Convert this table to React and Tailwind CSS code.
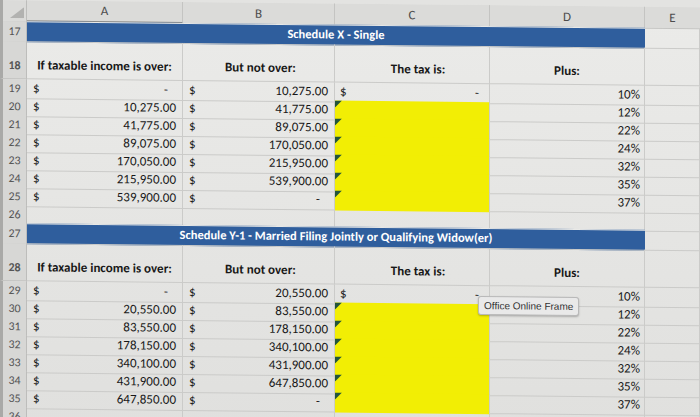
const COLS = "grid grid-cols-[27px_156px_152px_155px_155px_55px]";

const single = {
  over: ["-", "10,275.00", "41,775.00", "89,075.00", "170,050.00", "215,950.00", "539,900.00"],
  notOver: ["10,275.00", "41,775.00", "89,075.00", "170,050.00", "215,950.00", "539,900.00", "-"],
  plus: ["10%", "12%", "22%", "24%", "32%", "35%", "37%"],
};

const married = {
  over: ["-", "20,550.00", "83,550.00", "178,150.00", "340,100.00", "431,900.00", "647,850.00"],
  notOver: ["20,550.00", "83,550.00", "178,150.00", "340,100.00", "431,900.00", "647,850.00", "-"],
  plus: ["10%", "12%", "22%", "24%", "32%", "35%", "37%"],
};

const Num = ({ n, pad = "pb-[1px]" }) => (
  <div className={`border-l-[3px] border-l-[#a9a9a7] border-r border-b border-r-[#bdbdbb] border-b-[#c4c4c2] bg-[#d7d7d5] flex items-end justify-center text-[12px] text-[#555] ${pad}`}>
    {n}
  </div>
);

const Cell = ({ children, className = "" }) => (
  <div className={`border-r border-b border-[#cbcbc9] flex items-end whitespace-nowrap overflow-hidden ${className || "pb-[1px]"}`}>
    {children}
  </div>
);

const Money = ({ v }) => (
  <Cell className={`pb-[1px] justify-between pl-[6px] ${v === "-" ? "pr-[14px]" : "pr-[6px]"}`}>
    <span>$</span>
    <span>{v}</span>
  </Cell>
);

const Yellow = () => (
  <div className="relative bg-[#f2ee04] border-r border-[#cbcbc9]">
    <svg className="absolute left-0 top-0" width="7" height="7" viewBox="0 0 7 7">
      <polygon points="0,0 7,0 0,7" fill="#23553a" />
    </svg>
  </div>
);

const Banner = ({ n, title }) => (
  <div className={`${COLS} h-[20px]`}>
    <Num n={n} />
    <div className="col-span-4 bg-[#2f5e9d] border-b border-t border-t-[#e9e9e7] border-b-[#cbcbc9] flex items-center justify-center text-white font-bold text-[12.5px]">
      {title}
    </div>
    <Cell />
  </div>
);

const Headings = ({ n }) => (
  <div className={`${COLS} h-[38px] font-semibold`}>
    <Num n={n} pad="pb-[4px]" />
    <Cell className="pb-[4px] justify-center">If taxable income is over:</Cell>
    <Cell className="pb-[4px] pl-[42px]">But not over:</Cell>
    <Cell className="pb-[4px] justify-center pl-[12px]">The tax is:</Cell>
    <Cell className="pb-[4px] justify-center">Plus:</Cell>
    <Cell />
  </div>
);

const Bracket = ({ start, data }) =>
  data.over.map((v, i) => (
    <div key={i} className={`${COLS} h-[18px]`}>
      <Num n={start + i} />
      <Money v={v} />
      <Money v={data.notOver[i]} />
      {i === 0 ? (
        <Cell className="pb-[1px] justify-between pl-[5px] pr-[10px]">
          <span>$</span>
          <span>-</span>
        </Cell>
      ) : (
        <Yellow />
      )}
      <Cell className="pb-[1px] justify-end pr-[4px]">{data.plus[i]}</Cell>
      <Cell />
    </div>
  ));

const Empty = ({ n }) => (
  <div className={`${COLS} h-[18px]`}>
    <Num n={n} />
    <Cell />
    <Cell />
    <Cell />
    <Cell />
    <Cell />
  </div>
);

export default function App() {
  return (
    <div className="w-[700px] h-[417px] overflow-hidden bg-[#e3e3e1] font-['Carlito','Lato',sans-serif] text-[13px] text-[#181818]">
      <div className="relative origin-top-left skew-y-[0.6deg] bg-linear-to-b from-[#ebebe9] to-[#e0e0de]">
        <div className={`${COLS} h-[21px] bg-[#dbdbd9] text-[#4d4d4d] text-[13px]`}>
          <div className="border-l-[3px] border-l-[#a9a9a7] border-r border-b border-[#bdbdbb] flex items-end justify-end pr-[2px] pb-[3px]">
            <svg width="14" height="11" viewBox="0 0 14 11">
              <polygon points="14,0 14,11 0,11" fill="#b2b2b0" />
            </svg>
          </div>
          <div className="border-r border-[#c4c4c2] border-b-2 border-b-[#8a8a88] flex items-center justify-center">A</div>
          <div className="border-r border-b border-[#c4c4c2] flex items-center justify-center">B</div>
          <div className="border-r border-b border-[#c4c4c2] flex items-center justify-center">C</div>
          <div className="border-r border-b border-[#c4c4c2] flex items-center justify-center">D</div>
          <div className="border-b border-[#c4c4c2] flex items-center justify-center">E</div>
        </div>

        <Banner n={17} title="Schedule X - Single" />
        <Headings n={18} />
        <Bracket start={19} data={single} />
        <Empty n={26} />

        <Banner n={27} title="Schedule Y-1 - Married Filing Jointly or Qualifying Widow(er)" />
        <Headings n={28} />
        <Bracket start={29} data={married} />
        <Empty n={36} />

        <div className="absolute left-[478px] top-[291px] px-[5px] py-[1px] rounded-[3px] border border-[#b9b9b9] bg-[#e9e9e9] shadow-[0_1px_2px_rgba(0,0,0,0.25)] font-['Liberation_Sans',sans-serif] text-[10px] text-[#333]">
          Office Online Frame
        </div>
      </div>
    </div>
  );
}
